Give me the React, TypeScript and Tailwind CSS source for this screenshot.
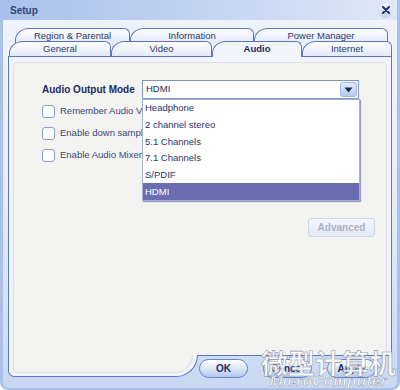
import { useState } from "react";

const backTabs = [
  { label: "Region & Parental", w: "w-[115px]" },
  { label: "Information", w: "w-[124px]" },
  { label: "Power Manager", w: "w-[134px]" },
];

const frontTabs = [
  { label: "General", w: "w-[102px]" },
  { label: "Video", w: "w-[101px]" },
  { label: "Audio", w: "w-[90px]" },
  { label: "Internet", w: "w-[90px]" },
];

const modes = ["Headphone", "2 channel stereo", "5.1 Channels", "7.1 Channels", "S/PDIF", "HDMI"];

const checks = ["Remember Audio Volume", "Enable down sampling", "Enable Audio Mixer"];

function Tab({ label, w, active }: { label: string; w: string; active?: boolean }) {
  return (
    <div
      className={
        "flex items-center justify-center border-x border-t border-[#5a78c2] rounded-tl-[14px_12px] rounded-tr-[6px] text-[9.5px] " +
        w +
        (active
          ? " relative z-10 -mb-px h-[16px] bg-[#f1f4fb] font-bold text-[#1c2a5c]"
          : " h-[15px] bg-gradient-to-b from-[#fdfdff] to-[#e3eaf8] text-[#2c3866]")
      }
    >
      {label}
    </div>
  );
}

export default function App() {
  const [mode, setMode] = useState("HDMI");

  return (
    <div
      className="w-[400px] h-[390px] flex flex-col overflow-hidden rounded-b-[8px] border-x-[3px] border-b-[2px] border-[#a9c0ea] bg-gradient-to-b from-[#eff3fb] via-[#e8eef9] to-[#c9d8f2] text-[9px] text-[#2c3866]"
      style={{ fontFamily: '"Liberation Sans", Arial, sans-serif' }}
    >
      {/* title bar */}
      <div className="-mx-[3px] h-[20px] shrink-0 flex items-center justify-between pl-[10px] pr-[7px] bg-gradient-to-r from-[#a8c1ea] via-[#c2d3f1] to-[#e0e8f7]">
        <span className="text-[10px] font-bold text-[#2d4675]">Setup</span>
        <div className="w-[15px] h-[15px] rounded-full bg-gradient-to-b from-[#eef2fb] to-[#c7d5ef] flex items-center justify-center">
          <svg width="8" height="8" viewBox="0 0 8 8">
            <path d="M1 1L7 7M7 1L1 7" stroke="#24356b" strokeWidth="2" strokeLinecap="round" />
          </svg>
        </div>
      </div>

      {/* tabs */}
      <div className="mt-[8px] flex flex-col">
        <div className="flex pl-[12px] h-[13px] overflow-visible">
          {backTabs.map((t) => (
            <div key={t.label} className="flex flex-col">
              <Tab label={t.label} w={t.w} />
            </div>
          ))}
        </div>
        <div className="flex items-end pl-[6px] h-[15px]">
          {frontTabs.map((t) => (
            <Tab key={t.label} label={t.label} w={t.w} active={t.label === "Audio"} />
          ))}
        </div>
      </div>

      {/* panel */}
      <div className="ml-[5px] w-[384px] flex flex-col">
        <div className="h-[299px] border-x border-t border-[#5a78c2] bg-[#f1f4fb] px-[4px] pt-[5px]">
          <div className="relative h-full rounded-t-[5px] border-x border-t border-[#dcdde8] bg-[#f3f3f1] pl-[28px] pt-[17px]">
            <div className="flex items-center">
              <div className="w-[100px] text-[10px] font-bold text-[#1c2a5c]">Audio Output Mode</div>
              <div className="w-[217px] h-[19px] flex items-center justify-between border border-[#7d92c9] bg-white pl-[3px] pr-px">
                <span className="text-[9.5px] text-[#1c2a5c]">{mode}</span>
                <div className="w-[17px] h-[15px] rounded-[3px] border border-[#9fb3dd] bg-gradient-to-b from-[#e4ecfa] to-[#b7caee] flex items-center justify-center">
                  <svg width="9" height="6" viewBox="0 0 9 6">
                    <path d="M0.5 0.5H8.5L4.5 5.5Z" fill="#1d2a55" />
                  </svg>
                </div>
              </div>
            </div>

            <div className="mt-[6px] flex flex-col gap-[9px]">
              {checks.map((c) => (
                <label key={c} className="flex items-center gap-[5px] h-[13px]">
                  <span className="w-[13px] h-[13px] rounded-[3px] border border-[#8c9acb] bg-white" />
                  <span className="text-[9.5px] text-[#3a4677]">{c}</span>
                </label>
              ))}
            </div>

            <div className="mt-[56px] flex justify-end pr-[11px]">
              <button className="w-[67px] h-[19px] rounded-[3px] border border-[#cfd6e6] bg-gradient-to-b from-[#f4f6fb] to-[#e4e9f3] text-[10px] font-bold text-[#aab3c8]">
                Advanced
              </button>
            </div>

            {/* open dropdown list */}
            <div className="absolute left-[128px] top-[36px] w-[218px] border border-[#a7acd2] bg-white shadow-[1px_1px_1px_#9aa0c0]">
              {modes.map((m) => (
                <div
                  key={m}
                  onClick={() => setMode(m)}
                  className={
                    "h-[16.7px] flex items-center pl-[2px] text-[9.5px] " +
                    (m === mode ? "bg-[#6b6db3] text-white" : "text-[#26336a]")
                  }
                >
                  {m}
                </div>
              ))}
            </div>
          </div>
        </div>

        {/* bottom: foot + buttons */}
        <div className="flex h-[22px]">
          <div className="w-[190px] border-l border-b border-r border-[#5a78c2] rounded-bl-[6px] rounded-br-[22px] bg-[#f1f4fb] px-[4px] pb-[3px]">
            <div className="h-full border-x border-b border-[#dcdde8] rounded-bl-[4px] rounded-br-[18px] bg-[#f3f3f1]" />
          </div>
          <div className="relative flex-1 border-t border-[#5a78c2] flex items-start gap-[15px] pt-[3px] pl-[1px]">
            {["OK", "Cancel", "Apply"].map((b) => (
              <button
                key={b}
                className="w-[49px] h-[19px] rounded-full border border-[#6583c6] bg-gradient-to-b from-[#ffffff] via-[#dce6f8] to-[#b3c8ee] text-[10px] font-bold text-[#1e2d62]"
              >
                {b}
              </button>
            ))}
            {/* magazine watermark */}
            <div className="absolute right-[-4px] -top-[7px] flex flex-col items-center leading-none pointer-events-none">
              <span
                className="text-[27px] font-bold text-white/85 [-webkit-text-stroke:0.6px_#9299a8]"
                style={{ fontFamily: '"Noto Sans CJK SC", sans-serif' }}
              >
                微型计算机
              </span>
              <span className="text-[15px] italic font-bold text-white/85 tracking-[0.5px] [-webkit-text-stroke:0.5px_#9299a8] -mt-[3px]">
                MicroComputer
              </span>
            </div>
          </div>
        </div>
      </div>
    </div>
  );
}
